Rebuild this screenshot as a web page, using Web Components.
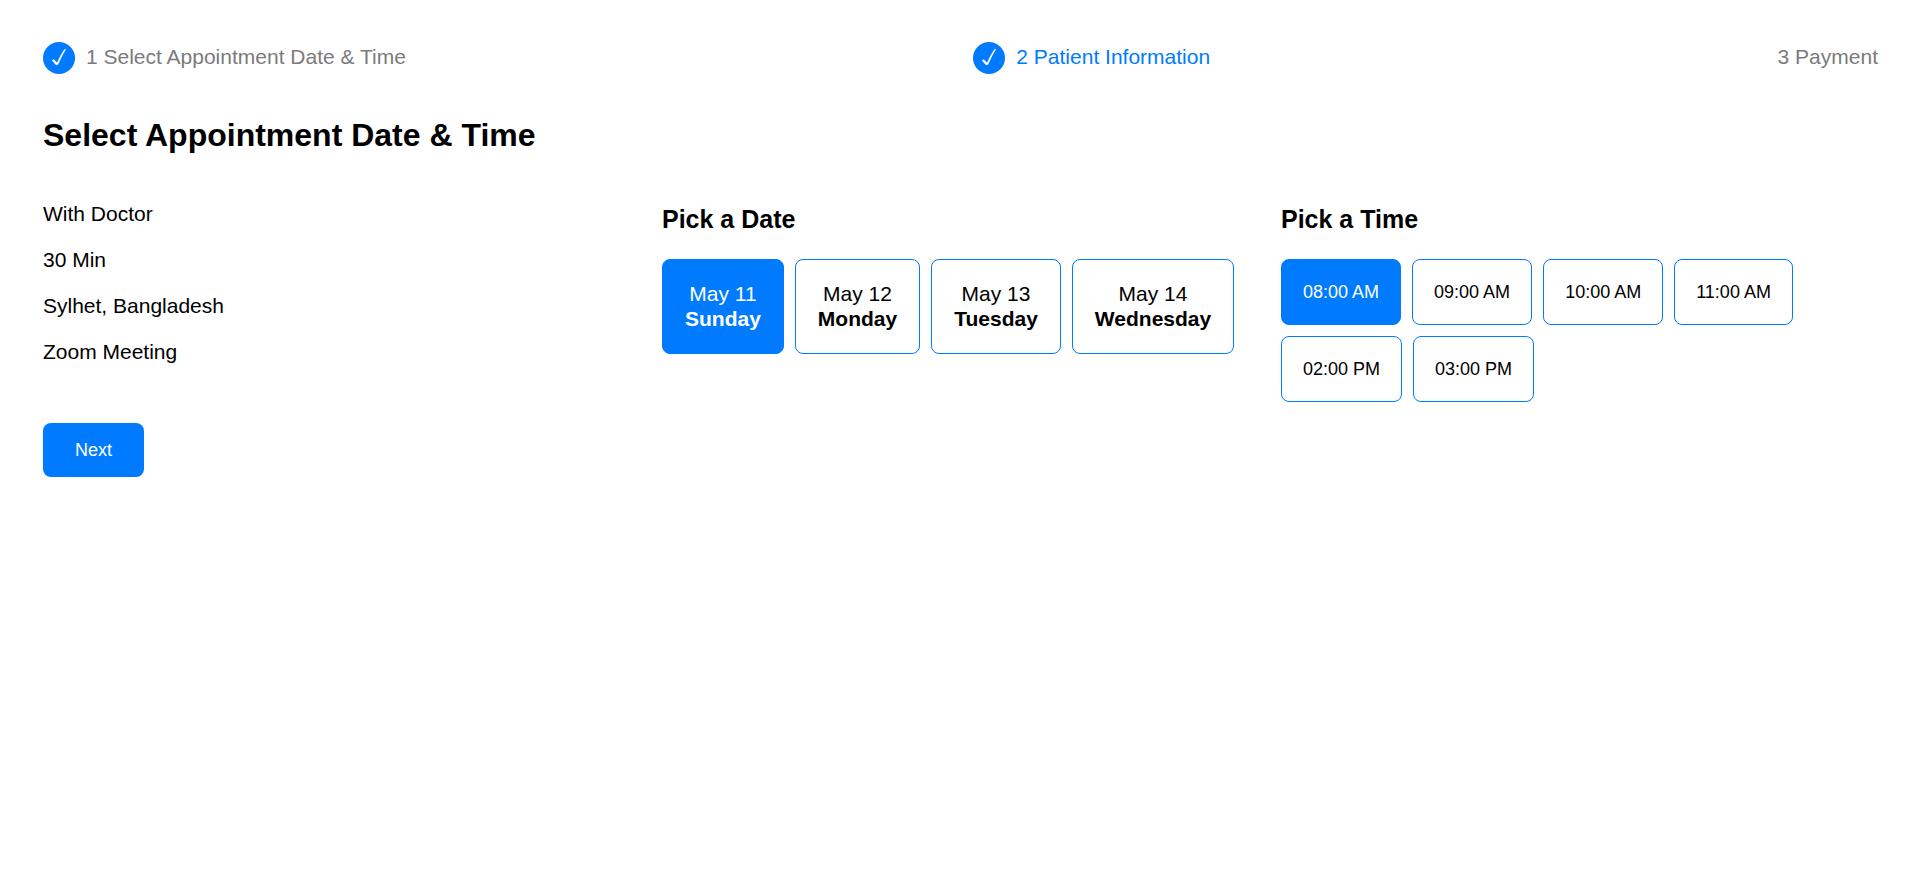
<!DOCTYPE html>
<html lang="en">
<head>
<meta charset="utf-8">
<meta name="viewport" content="width=device-width, initial-scale=1">
<title>Book an Appointment</title>
<style>
  body {
    margin: 0;
    background: #fff;
    color: #000;
    font: 21px/25px "Liberation Sans", Arial, sans-serif;
    --accent: #007bff;
    --muted: #7b7b7b;
    --radius: 8px;
  }
</style>
</head>
<body>
<appointment-page></appointment-page>

<template id="step-template">
  <style>
    :host { display: flex; align-items: flex-start; gap: 11px; min-height: 32px; line-height: 30px; color: var(--muted); }
    :host([current]) { color: var(--accent); }
    svg { display: none; width: 32px; height: 32px; flex: none; }
    :host([done]) svg { display: block; }
  </style>
  <svg viewBox="0 0 32 32" aria-hidden="true">
    <circle cx="16" cy="16" r="16" fill="#007bff"/>
    <path d="M8.8 18.4 L10.8 17.2 L14 20.8 Q17.4 12.6 21.2 7.4 L23.2 7 Q18.6 14 15.2 22.4 L13.2 23.2 Z" fill="#fff"/>
  </svg>
  <span><slot></slot></span>
</template>

<template id="choice-template">
  <style>
    :host { display: block; }
    button {
      display: block;
      box-sizing: border-box;
      margin: 0;
      padding: 21px;
      border: 1px solid var(--accent);
      border-radius: var(--radius);
      background: #fff;
      color: #000;
      font-family: inherit;
      font-size: 18px;
      line-height: 22px;
      text-align: center;
      white-space: nowrap;
      cursor: pointer;
    }
    :host([selected]) button { background: var(--accent); color: #fff; }
    :host([kind="date"]) button { padding: 21px 22px 22px; font-size: 21px; line-height: 25px; }
    .detail { display: block; font-weight: bold; }
  </style>
  <button type="button"><slot></slot><span class="detail"><slot name="day"></slot></span></button>
</template>

<template id="group-template">
  <style>
    :host { display: block; }
    h3 { margin: 4px 0 26px; font-size: 25px; line-height: 28px; }
    .choices { display: flex; flex-wrap: wrap; gap: 11px; }
  </style>
  <h3 id="heading"></h3>
  <div class="choices" role="group" aria-labelledby="heading"><slot></slot></div>
</template>

<template id="details-template">
  <style>
    :host { display: block; }
    ::slotted(p) { margin: 0 0 21px; }
  </style>
  <slot></slot>
</template>

<template id="page-template">
  <style>
    :host { display: block; padding: 42px 41px 42px 43px; }
    nav { display: flex; justify-content: space-between; align-items: center; margin-bottom: 43px; }
    h2 { margin: 0 0 47px; font-size: 32px; line-height: 37px; }
    main { display: grid; grid-template-columns: repeat(3, minmax(0, 1fr)); gap: 22px; }
    .next {
      margin: 38px 0 0;
      padding: 16px 32px;
      border: 0;
      border-radius: var(--radius);
      background: var(--accent);
      color: #fff;
      font-family: inherit;
      font-size: 18px;
      line-height: 22px;
      cursor: pointer;
    }
  </style>
  <nav aria-label="Progress">
    <booking-step done>1 Select Appointment Date &amp; Time</booking-step>
    <booking-step done current>2 Patient Information</booking-step>
    <booking-step>3 Payment</booking-step>
  </nav>
  <h2>Select Appointment Date &amp; Time</h2>
  <main>
    <appointment-details>
      <p>With Doctor</p>
      <p>30 Min</p>
      <p>Sylhet, Bangladesh</p>
      <p>Zoom Meeting</p>
      <button class="next" type="button">Next</button>
    </appointment-details>
    <choice-group heading="Pick a Date">
      <choice-card kind="date" selected>May 11<span slot="day">Sunday</span></choice-card>
      <choice-card kind="date">May 12<span slot="day">Monday</span></choice-card>
      <choice-card kind="date">May 13<span slot="day">Tuesday</span></choice-card>
      <choice-card kind="date">May 14<span slot="day">Wednesday</span></choice-card>
    </choice-group>
    <choice-group heading="Pick a Time">
      <choice-card selected>08:00 AM</choice-card>
      <choice-card>09:00 AM</choice-card>
      <choice-card>10:00 AM</choice-card>
      <choice-card>11:00 AM</choice-card>
      <choice-card>02:00 PM</choice-card>
      <choice-card>03:00 PM</choice-card>
    </choice-group>
  </main>
</template>

<script>
  class TemplateElement extends HTMLElement {
    constructor() {
      super();
      const template = document.getElementById(this.constructor.template);
      this.attachShadow({ mode: 'open' }).append(template.content.cloneNode(true));
    }
  }

  class BookingStep extends TemplateElement {
    static template = 'step-template';
  }

  class ChoiceCard extends TemplateElement {
    static template = 'choice-template';
    static observedAttributes = ['selected'];
    connectedCallback() { this.sync(); }
    attributeChangedCallback() { this.sync(); }
    sync() {
      this.shadowRoot.querySelector('button').setAttribute('aria-pressed', this.hasAttribute('selected'));
    }
  }

  class ChoiceGroup extends TemplateElement {
    static template = 'group-template';
    connectedCallback() {
      this.shadowRoot.querySelector('h3').textContent = this.getAttribute('heading');
      this.addEventListener('click', (event) => {
        const picked = event.target.closest('choice-card');
        if (!picked) return;
        for (const card of this.querySelectorAll('choice-card')) {
          card.toggleAttribute('selected', card === picked);
        }
      });
    }
  }

  class AppointmentDetails extends TemplateElement {
    static template = 'details-template';
  }

  class AppointmentPage extends TemplateElement {
    static template = 'page-template';
  }

  customElements.define('booking-step', BookingStep);
  customElements.define('choice-card', ChoiceCard);
  customElements.define('choice-group', ChoiceGroup);
  customElements.define('appointment-details', AppointmentDetails);
  customElements.define('appointment-page', AppointmentPage);
</script>
</body>
</html>
